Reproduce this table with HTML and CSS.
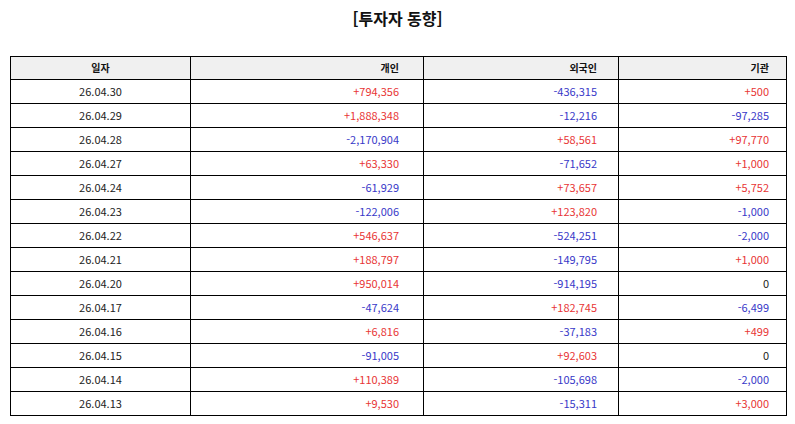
FILE: index.html
```html
<!DOCTYPE html>
<html lang="ko">
<head>
<meta charset="utf-8">
<title>투자자 동향</title>
<link rel="stylesheet" href="styles.css">
</head>
<body>
<h1 class="title">[투자자 동향]</h1>
<table class="trend">
  <colgroup>
    <col class="c-date"><col class="c-ind"><col class="c-for"><col class="c-inst">
  </colgroup>
  <thead>
    <tr><th class="date">일자</th><th class="p2">개인</th><th class="p3">외국인</th><th class="p4">기관</th></tr>
  </thead>
  <tbody>
    <tr><td class="date">26.04.30</td><td class="p2 up">+794,356</td><td class="p3 down">-436,315</td><td class="p4 up">+500</td></tr>
    <tr><td class="date">26.04.29</td><td class="p2 up">+1,888,348</td><td class="p3 down">-12,216</td><td class="p4 down">-97,285</td></tr>
    <tr><td class="date">26.04.28</td><td class="p2 down">-2,170,904</td><td class="p3 up">+58,561</td><td class="p4 up">+97,770</td></tr>
    <tr><td class="date">26.04.27</td><td class="p2 up">+63,330</td><td class="p3 down">-71,652</td><td class="p4 up">+1,000</td></tr>
    <tr><td class="date">26.04.24</td><td class="p2 down">-61,929</td><td class="p3 up">+73,657</td><td class="p4 up">+5,752</td></tr>
    <tr><td class="date">26.04.23</td><td class="p2 down">-122,006</td><td class="p3 up">+123,820</td><td class="p4 down">-1,000</td></tr>
    <tr><td class="date">26.04.22</td><td class="p2 up">+546,637</td><td class="p3 down">-524,251</td><td class="p4 down">-2,000</td></tr>
    <tr><td class="date">26.04.21</td><td class="p2 up">+188,797</td><td class="p3 down">-149,795</td><td class="p4 up">+1,000</td></tr>
    <tr><td class="date">26.04.20</td><td class="p2 up">+950,014</td><td class="p3 down">-914,195</td><td class="p4">0</td></tr>
    <tr><td class="date">26.04.17</td><td class="p2 down">-47,624</td><td class="p3 up">+182,745</td><td class="p4 down">-6,499</td></tr>
    <tr><td class="date">26.04.16</td><td class="p2 up">+6,816</td><td class="p3 down">-37,183</td><td class="p4 up">+499</td></tr>
    <tr><td class="date">26.04.15</td><td class="p2 down">-91,005</td><td class="p3 up">+92,603</td><td class="p4">0</td></tr>
    <tr><td class="date">26.04.14</td><td class="p2 up">+110,389</td><td class="p3 down">-105,698</td><td class="p4 down">-2,000</td></tr>
    <tr><td class="date">26.04.13</td><td class="p2 up">+9,530</td><td class="p3 down">-15,311</td><td class="p4 up">+3,000</td></tr>
  </tbody>
</table>
</body>
</html>
```

FILE: styles.css
```css
html, body {
  margin: 0;
  padding: 0;
  background: #ffffff;
}
body {
  padding: 8px 10px 0 10px;
  font-family: "Noto Sans CJK KR", "Noto Sans", sans-serif;
  color: #222222;
}
.title {
  margin: 0;
  height: 48px;
  line-height: 20px;
  font-size: 16px;
  font-weight: 700;
  text-align: center;
  color: #111111;
}
.trend {
  width: 776px;
  border-collapse: collapse;
  table-layout: fixed;
  font-size: 11px;
}
.c-date { width: 180px; }
.c-ind { width: 233px; }
.c-for { width: 195px; }
.c-inst { width: 168px; }
.trend th,
.trend td {
  border: 1px solid #000000;
  height: 22px;
  padding: 0 0 1px 0;
  line-height: 14px;
  white-space: nowrap;
}
.trend th {
  background: #f0f0f0;
  font-weight: 700;
  font-size: 10px;
  color: #111111;
  height: 21px;
}
.trend .date { text-align: center; }
.trend .p2 { text-align: right; padding-right: 24px; }
.trend .p3 { text-align: right; padding-right: 21px; }
.trend .p4 { text-align: right; padding-right: 17px; }
.up { color: #e83535; }
.down { color: #3838c8; }
```
